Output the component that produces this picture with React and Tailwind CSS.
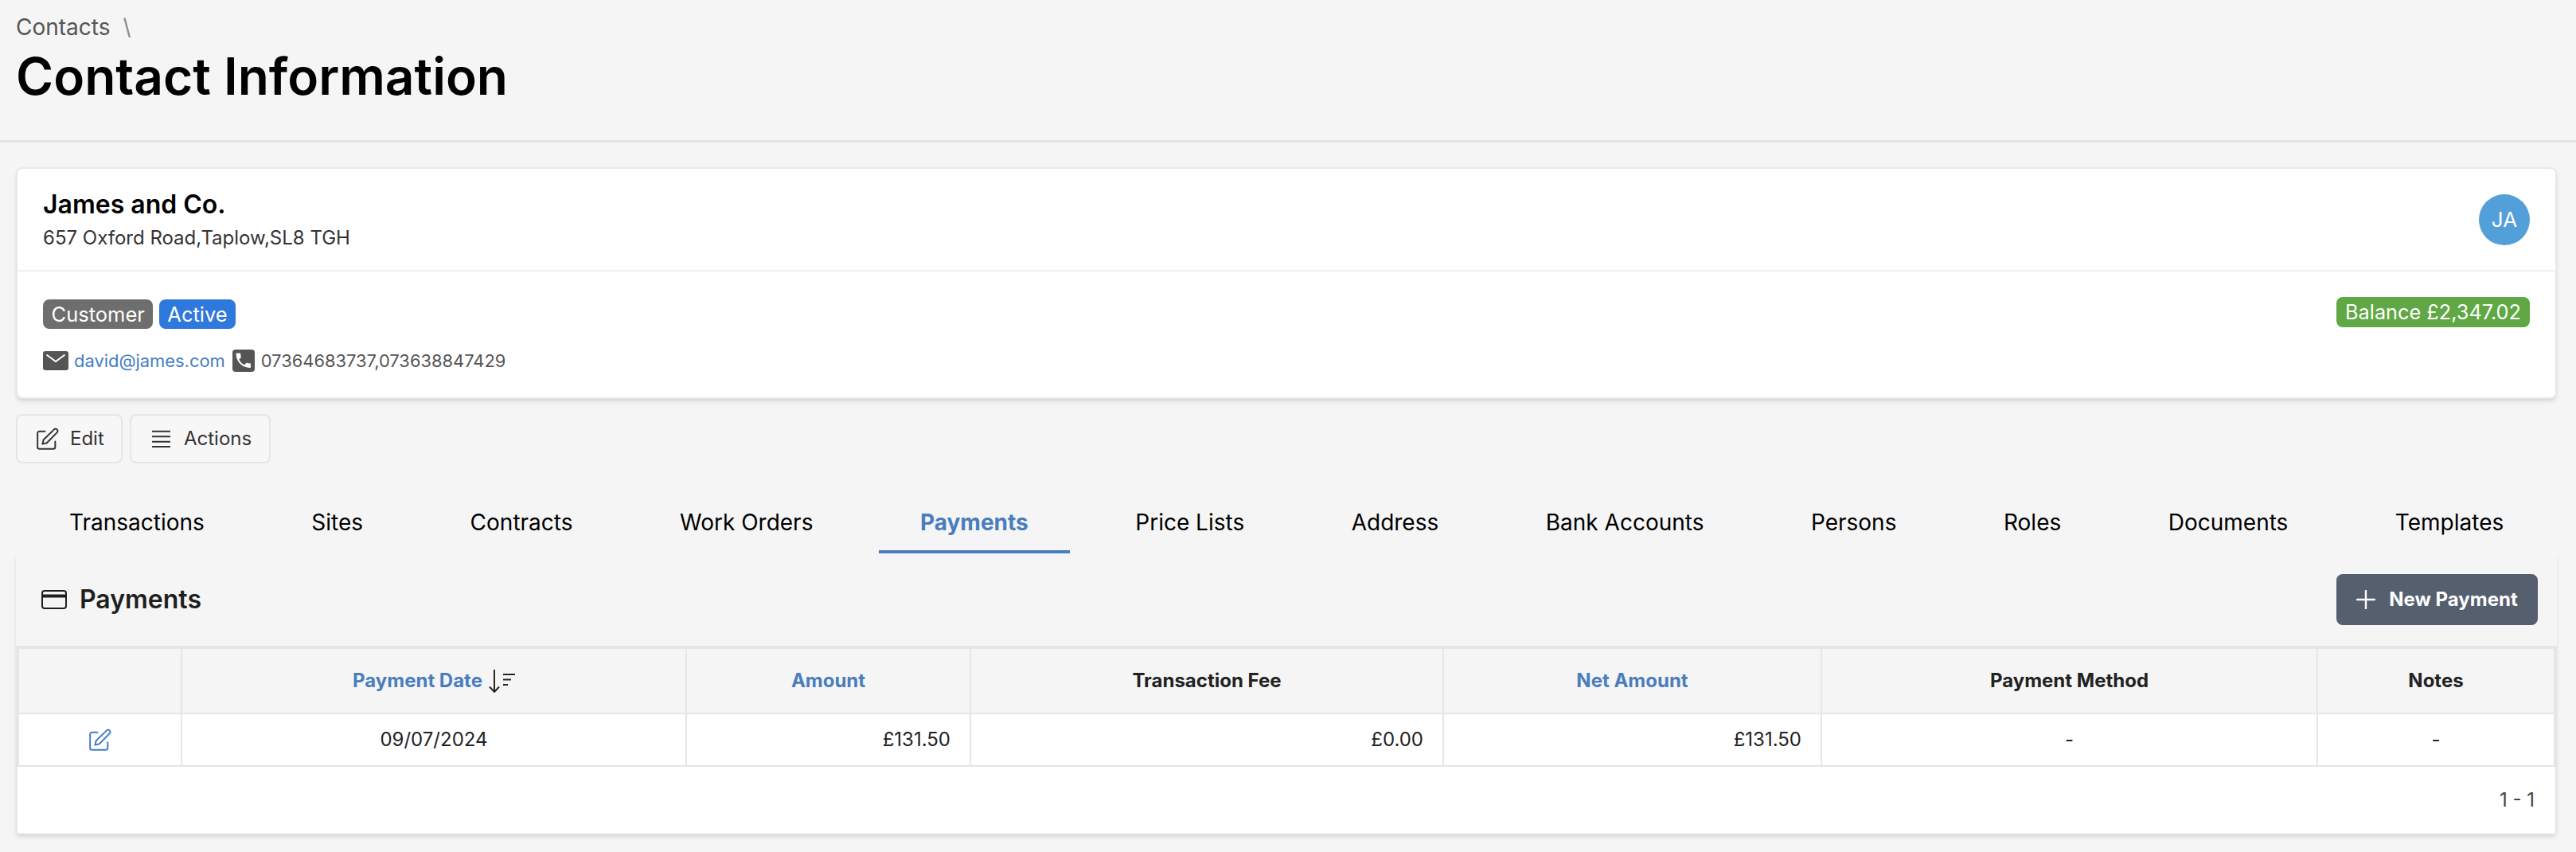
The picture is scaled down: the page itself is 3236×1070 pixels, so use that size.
const TABS = ['Transactions', 'Sites', 'Contracts', 'Work Orders', 'Payments', 'Price Lists', 'Address', 'Bank Accounts', 'Persons', 'Roles', 'Documents', 'Templates'];

const EditIcon = ({ className }) => (
  <svg viewBox="0 0 24 24" fill="none" stroke="currentColor" strokeWidth="1.7" strokeLinecap="round" strokeLinejoin="round" className={className}>
    <path d="M9 4H3a2 2 0 0 0-2 2v15a2 2 0 0 0 2 2h15a2 2 0 0 0 2-2v-6" />
    <path d="M19 1.800a2.300 2.300 0 0 1 3.200 3.200L11 16.500l-4.700 1.200 1.200-4.700z" />
  </svg>
);

const ListIcon = () => (
  <svg viewBox="0 0 25 24" fill="none" stroke="currentColor" strokeWidth="2.2" className="w-[25px] h-[22px]">
    <path d="M0 2h25M0 9h25M0 16h25M0 23h25" />
  </svg>
);

const CardIcon = () => (
  <svg viewBox="0 0 32 24" className="w-8 h-6 text-[#1f1f1f]" fill="none" stroke="currentColor">
    <rect x="1" y="1" width="30" height="22" rx="3" strokeWidth="2" />
    <path d="M1 7.500h30" strokeWidth="4" />
  </svg>
);

const SortIcon = () => (
  <svg viewBox="0 0 33 29" fill="none" stroke="#262626" strokeWidth="2" className="w-[33px] h-[29px]">
    <path d="M7 0v28M1 21.500 7 28l6-6.500" />
    <path d="M18 6h15M18 12.500h10M18 19h6" />
  </svg>
);

const PlusIcon = () => (
  <svg viewBox="0 0 24 24" fill="none" stroke="currentColor" strokeWidth="2.4" strokeLinecap="round" className="w-6 h-6">
    <path d="M12 1v22M1 12h22" />
  </svg>
);

const MailIcon = () => (
  <svg viewBox="0 0 32 24" className="w-8 h-6">
    <rect width="32" height="24" rx="3" fill="#555555" />
    <path d="M4.500 4.500 16 13 27.500 4.500" fill="none" stroke="#ffffff" strokeWidth="2" />
  </svg>
);

const PhoneIcon = () => (
  <svg viewBox="0 0 28 28" className="w-7 h-7">
    <rect width="28" height="28" rx="4" fill="#555555" />
    <path transform="translate(1.500 1.500) scale(1.020)" fill="#ffffff" d="M6.620 10.790c1.440 2.830 3.760 5.140 6.590 6.590l2.200-2.200c.27-.27.67-.36 1.020-.24 1.120.37 2.330.57 3.570.57.55 0 1 .45 1 1V20c0 .55-.45 1-1 1-9.390 0-17-7.610-17-17 0-.55.45-1 1-1h3.500c.55 0 1 .45 1 1 0 1.250.2 2.450.57 3.570.11.35.03.74-.25 1.020l-2.200 2.200z" />
  </svg>
);

function ActionButton({ icon, label, className }) {
  return (
    <button className={`h-[62px] flex items-center bg-[#f7f7f7] border-2 border-[#e6e6e6] rounded-lg text-2xl text-[#333333] ${className}`}>
      {icon}
      {label}
    </button>
  );
}

export default function App() {
  return (
    <div className="min-h-screen bg-[#f5f5f5] font-['Inter',sans-serif] text-black">
      <header className="h-[179px] border-b-[3px] border-[#e2e2e2] pl-5 pt-3.5">
        <div className="flex items-center h-10 text-[28px] leading-10 text-[#555555]">
          Contacts
          <span className="ml-4 text-[#8a8a8a]">\</span>
        </div>
        <h1 className="mt-0.5 text-[64px] leading-20 font-semibold">Contact Information</h1>
      </header>

      <main className="pl-5 pr-6">
        <section className="mt-[31px] bg-white border-2 border-[#e8e8e8] rounded-lg shadow-md">
          <div className="h-[129px] flex items-center justify-between px-8 border-b-2 border-[#f0f0f0]">
            <div>
              <h2 className="text-[32px] leading-10 font-semibold">James and Co.</h2>
              <p className="mt-[6px] text-2xl leading-8 text-[#333333]">657 Oxford Road,Taplow,SL8 TGH</p>
            </div>
            <div className="w-16 h-16 rounded-full bg-[#539fd9] text-white text-[26px] flex items-center justify-center">JA</div>
          </div>
          <div className="h-[158px] flex justify-between px-8 pt-[35px]">
            <div>
              <div className="flex gap-2">
                <span className="h-[37px] px-[10.5px] rounded-lg bg-[#6e6e6e] text-white text-[25.5px] leading-[37px]">Customer</span>
                <span className="h-[37px] px-[10px] rounded-lg bg-[#2f78dc] text-white text-[25.5px] leading-[37px]">Active</span>
              </div>
              <div className="mt-[26px] flex items-center h-7 text-[21.9px]">
                <MailIcon />
                <span className="ml-[7px] text-[#447dc4]">david@james.com</span>
                <span className="ml-[9px]"><PhoneIcon /></span>
                <span className="ml-[8px] text-[#555555]">07364683737,073638847429</span>
              </div>
            </div>
            <span className="h-[38px] -mt-[3px] px-[11px] rounded-lg bg-[#5fa845] text-white text-[25.3px] leading-[38px]">Balance £2,347.02</span>
          </div>
        </section>

        <div className="mt-[19px] flex gap-[9px]">
          <ActionButton className="w-[134px] pl-6 gap-[14px]" icon={<EditIcon className="w-7 h-7" />} label="Edit" />
          <ActionButton className="w-[177px] pl-[25px] gap-[16px]" icon={<ListIcon />} label="Actions" />
        </div>

        <nav className="mt-9 pl-[15px] flex gap-[30.5px] text-[28px] leading-10">
          {TABS.map(tab => (
            <a
              key={tab}
              className={`px-[52px] pt-[18px] pb-[15px] border-b-4 ${tab === 'Payments' ? 'border-[#4a7dbd] text-[#4a7dbd] font-[650]' : 'border-transparent'}`}
            >
              {tab}
            </a>
          ))}
        </nav>

        <section className="shadow-md">
          <div className="h-[116px] flex items-center justify-between pl-8 pr-6">
            <div className="flex items-center gap-[16px]">
              <CardIcon />
              <h3 className="text-[32px] leading-10 font-semibold text-[#1f1f1f]">Payments</h3>
            </div>
            <button className="w-[253px] h-16 flex items-center justify-center gap-[17px] rounded-lg bg-[#555f6d] text-white text-2xl font-[650]">
              <PlusIcon />
              New Payment
            </button>
          </div>
          <div className="border-t-4 border-x-4 border-[#e6e6e6]">
            <table className="w-full table-fixed border-separate border-spacing-0 text-2xl text-[#222222]">
              <colgroup>
                <col className="w-[205px]" />
                <col className="w-[634px]" />
                <col className="w-[357px]" />
                <col className="w-[594px]" />
                <col className="w-[475px]" />
                <col className="w-[623px]" />
                <col className="w-[296px]" />
              </colgroup>
              <thead>
                <tr className="h-[82px]">
                  <th className="border-r-2 border-b-2 border-[#e6e6e6]" />
                  <th className="border-r-2 border-b-2 border-[#e6e6e6] font-[650] text-[#4a7dbd]">
                    <span className="flex items-center justify-center gap-2">Payment Date <SortIcon /></span>
                  </th>
                  <th className="border-r-2 border-b-2 border-[#e6e6e6] font-[650] text-[#4a7dbd]">Amount</th>
                  <th className="border-r-2 border-b-2 border-[#e6e6e6] font-[650]">Transaction Fee</th>
                  <th className="border-r-2 border-b-2 border-[#e6e6e6] font-[650] text-[#4a7dbd]">Net Amount</th>
                  <th className="border-r-2 border-b-2 border-[#e6e6e6] font-[650]">Payment Method</th>
                  <th className="border-b-2 border-[#e6e6e6] font-[650]">Notes</th>
                </tr>
              </thead>
              <tbody className="bg-white">
                <tr className="h-[64px]">
                  <td className="border-r-2 border-[#e6e6e6] text-[#447dc4]">
                    <span className="flex justify-center"><EditIcon className="w-7 h-7" /></span>
                  </td>
                  <td className="border-r-2 border-[#e6e6e6] text-center">09/07/2024</td>
                  <td className="border-r-2 border-[#e6e6e6] text-right pr-6">£131.50</td>
                  <td className="border-r-2 border-[#e6e6e6] text-right pr-6">£0.00</td>
                  <td className="border-r-2 border-[#e6e6e6] text-right pr-6">£131.50</td>
                  <td className="border-r-2 border-[#e6e6e6] text-center">-</td>
                  <td className="text-center">-</td>
                </tr>
              </tbody>
            </table>
          </div>
          <div className="h-[87px] pr-[26px] flex items-center justify-end bg-white border-2 border-[#e6e6e6] border-b-[#ebebeb] text-2xl text-[#444444]">1 - 1</div>
        </section>
      </main>
    </div>
  );
}
